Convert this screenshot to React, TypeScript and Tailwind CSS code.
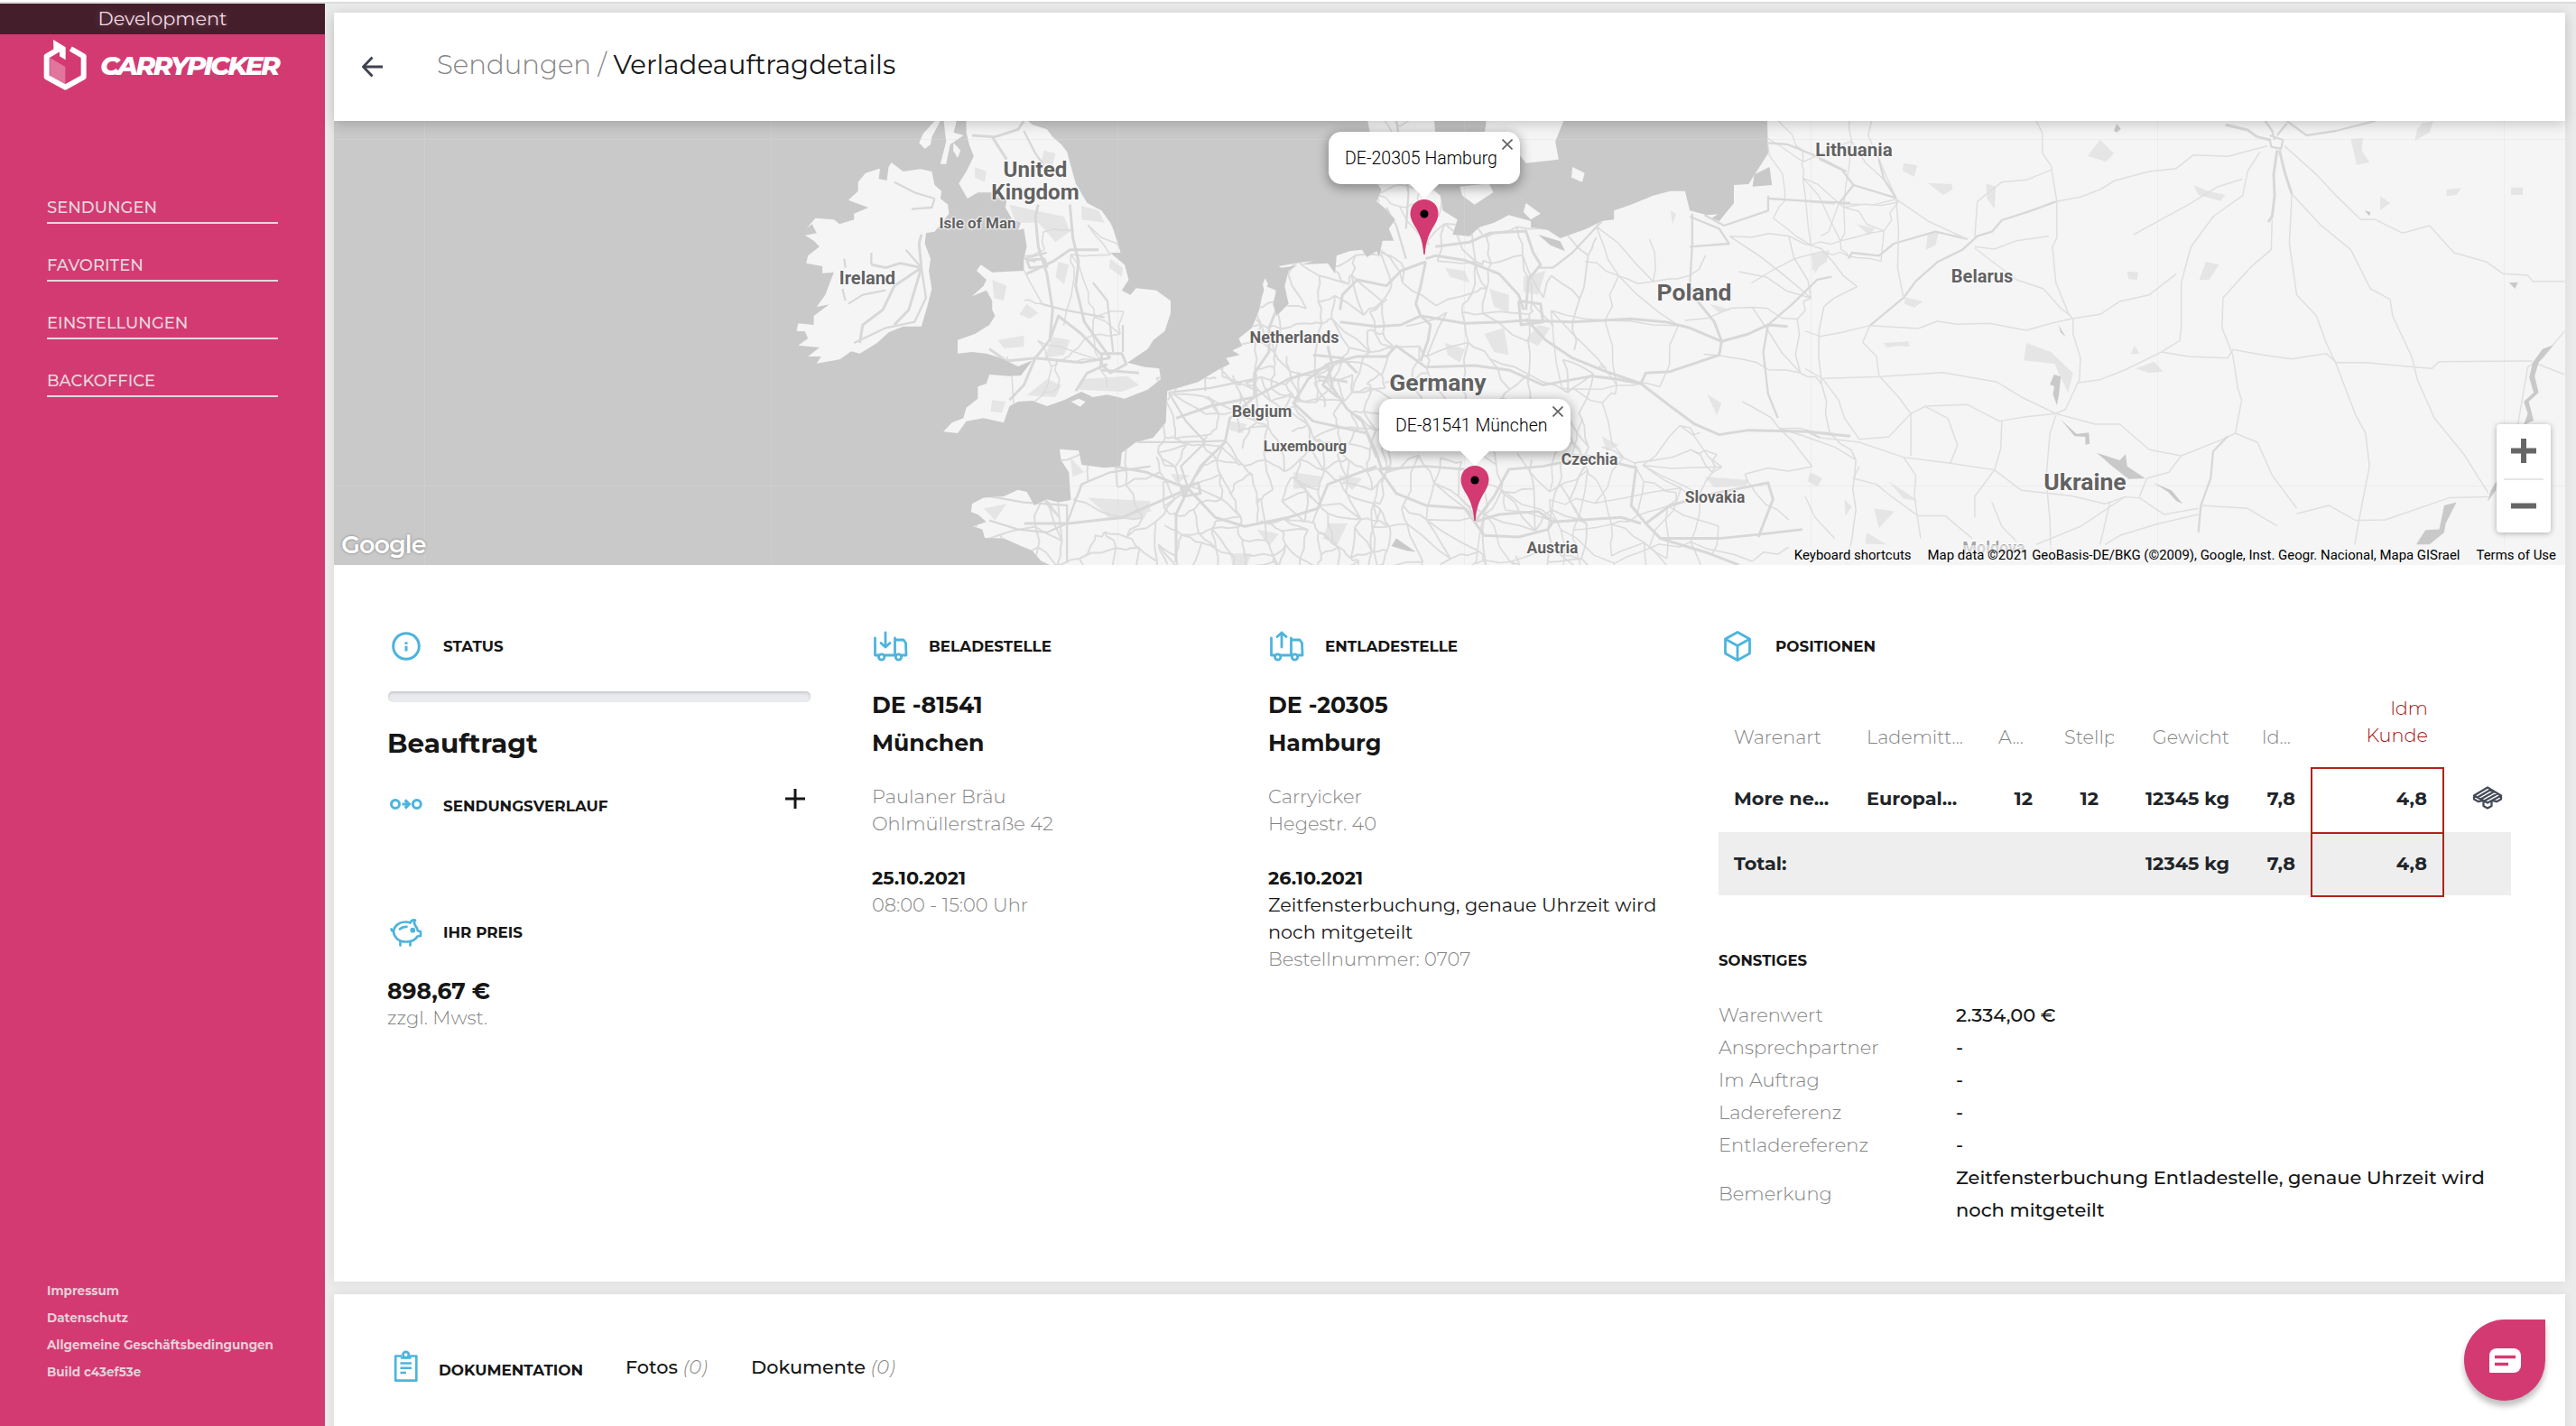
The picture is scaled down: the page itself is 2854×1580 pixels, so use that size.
import type { ReactNode } from 'react';

const BLUE = '#4db4dd';

/* ---------- map data ---------- */

// Three local coordinate frames are used for the coast lines and roads.
const WEST = 'translate(369 130) scale(0.6378 0.3333)';
const MID = 'translate(1200 130) scale(0.5421 0.3333)';
const EAST = 'translate(2000 130) scale(0.5446 0.3333)';

const LAND: { t: string; p: string }[] = [
  {
    t: WEST,
    p: '970,150 990,180 1020,172 1040,180 1045,225 1057,245 1055,270 1068,290 1070,320 1045,380 1030,385 1028,420 1038,470 1035,510 1040,570 1032,630 1022,695 990,695 965,715 945,750 915,785 900,778 880,805 840,818 848,795 825,795 845,765 808,758 825,735 820,712 805,710 808,685 835,690 835,660 862,622 840,630 855,590 865,540 870,515 850,518 850,495 822,485 825,460 845,430 835,410 820,392 840,385 832,355 822,370 838,335 870,340 880,355 905,340 905,320 930,300 895,275 912,245 912,215 925,185 950,170 948,205 962,210 965,165',
  },
  {
    t: WEST,
    p: '1100,0 1200,0 1215,25 1240,40 1250,65 1265,90 1275,115 1280,150 1290,220 1310,285 1335,310 1350,350 1355,370 1368,450 1350,450 1375,490 1382,540 1370,575 1385,590 1395,568 1430,575 1455,610 1455,650 1445,710 1425,740 1415,770 1380,815 1410,830 1435,835 1438,870 1415,905 1375,935 1345,922 1320,930 1300,912 1270,940 1240,960 1215,942 1190,945 1175,960 1165,1015 1130,1000 1100,1010 1085,1050 1060,1045 1075,1015 1095,1000 1100,965 1120,935 1120,895 1135,885 1140,855 1175,860 1195,858 1215,808 1190,828 1160,800 1135,785 1110,780 1085,785 1085,740 1115,720 1140,690 1150,660 1145,640 1145,610 1135,575 1110,595 1130,560 1135,540 1118,510 1125,490 1145,515 1200,510 1200,470 1205,430 1200,370 1190,375 1195,350 1180,340 1168,300 1170,275 1150,250 1120,250 1102,270 1087,220 1100,180 1113,130 1105,90 1100,50',
  },
  { t: WEST, p: '1060,0 1085,0 1078,50 1095,60 1072,90 1065,155 1055,155 1065,80' },
  { t: WEST, p: '1045,12 1055,12 1040,65 1038,90 1028,105 1018,85 1025,55' },
  { t: WEST, p: '1078,85 1090,110 1085,135 1077,110' },
  { t: WEST, p: '1295,935 1307,945 1298,962 1282,945' },
  {
    t: MID,
    p: '-68,1488 -86,1475 -104,1440 -127,1425 -162,1400 -201,1398 -206,1370 -225,1360 -198,1345 -215,1320 -229,1312 -227,1285 -204,1265 -162,1260 -133,1238 -115,1245 -100,1290 -74,1270 -50,1280 -25,1272 -27,1230 -29,1180 -45,1140 -48,1103 -9,1108 -3,1155 43,1165 76,1160 79,1115 108,1080 143,1065 169,1015 172,910 235,880 275,840 300,820 292,800 320,790 305,775 325,760 318,735 345,700 360,640 365,600 372,560 395,575 388,620 395,660 420,620 412,560 420,510 440,490 500,485 515,520 518,460 545,445 570,440 580,465 600,445 605,465 612,410 635,410 625,370 638,340 615,300 600,280 610,240 595,210 598,150 590,80 580,0 717,0 720,60 700,120 700,220 730,260 735,310 765,340 755,390 790,395 810,365 840,350 870,325 915,345 915,365 950,375 975,402 1030,370 1060,345 1085,340 1085,310 1120,290 1165,260 1200,245 1230,245 1240,310 1275,325 1310,320 1330,285 1330,225 1360,222 1400,120 1398,0 3200,0 3200,1510 -68,1510',
  },
  { t: MID, p: '770,230 830,220 838,250 800,290 775,260' },
  { t: MID, p: '825,0 985,0 965,80 972,140 905,152 885,110 870,60 858,90 820,60' },
  { t: MID, p: '1000,165 1025,185 1020,215 998,200' },
  { t: MID, p: '905,285 935,320 915,340 900,315' },
  { t: MID, p: '372,535 378,555 370,575 367,555' },
  { t: MID, p: '400,495 440,483 470,478 440,492 405,500' },
];

const WATER: { t: string; p: string }[] = [
  { t: MID, p: '1372,190 1403,165 1408,225 1368,230' },
  { t: MID, p: '1330,285 1300,345 1285,335 1312,305' },
  { t: MID, p: '930,390 975,412 985,445 955,425' },
  { t: MID, p: '640,1400 680,1445 660,1440 630,1425' },
  { t: EAST, p: '593,1115 640,1140 652,1120 655,1160 692,1200 658,1202 625,1160' },
  { t: EAST, p: '506,855 520,862 516,925 512,957 504,920 507,895 498,888' },
  { t: EAST, p: '1300,1290 1325,1280 1303,1350 1300,1380 1270,1420 1243,1420 1262,1372 1290,1370' },
  { t: EAST, p: '520,1005 552,1052 577,1048 579,1085 570,1088 570,1062 548,1060' },
  { t: EAST, p: '708,1214 745,1240 768,1285 755,1275 738,1245' },
  { t: EAST, p: '1522,757 1492,815 1484,860 1492,915 1472,945 1482,1008 1462,1022 1470,985 1462,945 1482,915 1473,865 1480,815 1500,770' },
  { t: EAST, p: '1410,1200 1405,1240 1388,1278 1395,1240' },
  { t: EAST, p: '628,45 634,22 642,38 634,50' },
  { t: EAST, p: '515,690 530,730 520,715' },
  { t: EAST, p: '1138,310 1150,315 1148,328' },
  { t: EAST, p: '1432,550 1450,548 1444,570' },
];

const PARKS: { t: string; p: string }[] = [
  { t: EAST, p: '600,75 628,120 612,148 575,128 590,95' },
  { t: EAST, p: '1110,72 1135,68 1132,110 1148,150 1122,158' },
  { t: EAST, p: '1255,20 1278,12 1270,50 1240,78 1245,40' },
  { t: EAST, p: '250,218 298,222 300,240 280,258' },
  { t: EAST, p: '368,220 388,230 385,305 370,270' },
  { t: EAST, p: '200,152 228,160 222,198 198,178' },
  { t: EAST, p: '450,750 500,780 545,850 535,915 518,860 508,820 445,808' },
  { t: EAST, p: '250,385 272,380 265,425 245,440' },
  { t: EAST, p: '815,480 842,490 822,540 802,540' },
  { t: EAST, p: '655,512 678,515 675,540 658,538' },
  { t: EAST, p: '203,598 240,612 222,632 202,620' },
  { t: EAST, p: '105,355 142,370 130,392' },
  { t: EAST, p: '790,225 820,245 855,258 845,278 800,258' },
  { t: EAST, p: '1305,240 1335,235 1325,258 1305,262' },
  { t: EAST, p: '1436,233 1460,233 1460,258 1436,258' },
  { t: EAST, p: '1170,262 1190,285 1170,308' },
  { t: EAST, p: '670,758 680,785 662,788' },
  { t: EAST, p: '672,835 710,812 728,845 700,850' },
  { t: EAST, p: '160,750 210,745 212,762 190,760 165,765' },
  { t: EAST, p: '125,1380 165,1420 122,1418' },
  { t: EAST, p: '10,1180 35,1200 25,1228 5,1210' },
  { t: EAST, p: '140,1300 182,1310 150,1365' },
  { t: EAST, p: '12,455 45,450 20,520' },
  { t: EAST, p: '170,1210 230,1275 200,1268' },
  { t: EAST, p: '80,1270 95,1295 82,1325' },
  { t: WEST, p: '1175,290 1220,310 1270,330 1280,380 1255,415 1225,350 1185,350' },
  { t: WEST, p: '1300,295 1330,310 1340,350 1300,340' },
  { t: WEST, p: '1115,165 1135,180 1132,215 1115,200' },
  { t: WEST, p: '1235,110 1255,120 1250,160 1230,150' },
  { t: WEST, p: '1145,540 1170,560 1165,610 1148,600' },
  { t: WEST, p: '1260,480 1278,490 1270,555 1255,530' },
  { t: WEST, p: '1155,740 1200,725 1200,762 1165,768' },
  { t: WEST, p: '1250,730 1280,740 1270,790 1235,800' },
  { t: WEST, p: '1300,870 1380,860 1400,890 1370,912 1295,905' },
  { t: WEST, p: '1240,870 1265,890 1255,930 1205,925' },
  { t: WEST, p: '1145,940 1168,945 1162,982 1142,978' },
  { t: WEST, p: '1205,620 1225,650 1210,670 1192,655' },
  { t: WEST, p: '1350,470 1372,500 1370,530 1348,500' },
  { t: WEST, p: '1320,1265 1380,1280 1420,1275 1410,1330 1350,1340' },
  { t: WEST, p: '1130,1300 1170,1285 1150,1340' },
  { t: WEST, p: '1280,1130 1305,1180 1285,1195' },
  { t: WEST, p: '1455,1185 1490,1190 1465,1215' },
  { t: MID, p: '830,570 870,590 870,650 840,630' },
  { t: MID, p: '900,530 945,510 930,590 900,580' },
  { t: MID, p: '740,750 780,770 770,815 745,790' },
  { t: MID, p: '820,720 860,700 870,790 840,780' },
  { t: MID, p: '740,500 780,510 790,550 750,530' },
  { t: MID, p: '300,1010 335,1020 325,1050 300,1040' },
  { t: MID, p: '355,1370 400,1385 380,1425' },
  { t: MID, p: '500,1350 540,1350 520,1420 490,1400' },
  { t: MID, p: '430,1180 490,1195 480,1230 430,1235' },
  { t: MID, p: '520,1190 570,1200 550,1240' },
  { t: MID, p: '1060,1060 1095,1090 1070,1110' },
  { t: MID, p: '1270,1195 1360,1205 1355,1225 1290,1230' },
  { t: MID, p: '1275,920 1305,950 1295,990' },
  { t: MID, p: '1490,460 1525,440 1520,480 1490,510' },
  { t: MID, p: '1280,620 1325,640 1300,650' },
  { t: MID, p: '1200,310 1212,320 1205,355' },
  { t: MID, p: '1060,815 1072,835 1050,835' },
  { t: MID, p: '300,1450 345,1450 335,1488 305,1488' },
  { t: MID, p: '930,690 955,700 930,760 905,740' },
  { t: MID, p: '10,1265 130,1275 140,1310 60,1340' },
];

// [frame, width, points]
const ROADS: [string, number, string][] = [
  [EAST, 4, '855,25 900,42 920,65 945,75'],
  [EAST, 4, '960,110 953,190 955,260 950,330 942,348'],
  [EAST, 4, '965,110 975,180 990,255'],
  [EAST, 3, '935,10 950,45 955,75 M 960,60 980,20 M 945,60 972,75 968,105 948,98 945,70'],
  [EAST, 2, '940,95 860,130 790,125 755,170 700,180 630,210 600,240 560,265 510,280'],
  [EAST, 3, '510,280 460,310 400,342 380,380 350,395 320,440 270,480 225,545 200,600 132,692'],
  [EAST, 3, '330,405 265,380 180,420 150,460 95,450 88,470'],
  [EAST, 2, '132,692 75,715 30,728 0,710 M 132,692 230,702 268,678 310,688 375,685 450,708 500,685 545,668 600,655 640,612 700,590 755,520'],
  [EAST, 2, '132,692 117,748 145,795 150,858 190,930 215,985 215,1125'],
  [EAST, 2, '135,12 128,60 150,140 185,270 190,380 188,500 200,600'],
  [EAST, 3, '28,138 75,175 98,225 68,288 M 150,140 160,205 185,268 M 98,225 185,268'],
  [EAST, 2, '68,288 140,290 185,272 250,345 330,405 M 0,280 60,288 M 68,288 48,380 32,395'],
  [EAST, 2, '470,12 482,50 483,120 500,160 512,280 512,400 503,430 510,550 535,650 545,672 545,720 560,800 558,870 530,970 510,985'],
  [EAST, 2, '345,435 430,540 485,570 520,635 540,660'],
  [EAST, 2, '345,400 350,280 400,215 450,208 500,175 M 345,430 385,438 430,410 495,395'],
  [EAST, 2, '890,205 840,230 780,290 668,390'],
  [EAST, 2, '925,115 900,180 890,260 830,330 785,430 765,550 765,700 762,742 725,780 650,840 600,872 555,882'],
  [EAST, 2, '950,340 948,440 905,500 850,600 848,700 870,790 880,900 888,940 875,1050'],
  [EAST, 2, '990,255 985,420 1000,590 1040,660 1060,750 1080,820 1120,990 1140,1050 1148,1160 1130,1310 1118,1420'],
  [EAST, 2, '975,95 1040,190 1080,260 1130,340 1160,340 1215,385 1270,360 1320,450 1385,480 1420,520 1470,525 1480,545 1545,545'],
  [EAST, 2, '990,255 1050,360 1110,440 1150,570 1190,605 1195,660 1235,800 1245,870 1280,1000 1340,1120 1390,1250'],
  [EAST, 2, '725,780 780,795 860,800 870,772 930,790 990,803 1060,785 1080,815 1140,815 1240,830 1275,835 1290,812 1480,810'],
  [EAST, 2, '0,835 35,868 155,862 280,848 390,880 440,930 510,985'],
  [EAST, 3, '0,1040 30,1065'],
  [EAST, 2, '30,1065 110,1080 200,1130 295,1150 385,1172 440,1240 540,1258 610,1285 650,1262 680,1265 730,1320 800,1300'],
  [EAST, 2, '35,868 68,940 80,1000 110,1070 170,1062 215,985 245,960 330,955 395,1010 450,995 510,985'],
  [EAST, 2, '245,962 290,1000 310,1090 295,1150 M 400,1010 398,1100 385,1172 345,1260 345,1330'],
  [EAST, 2, '510,985 590,1020 640,1020 700,1105 765,1125 850,1070 875,1050 920,1080 950,1190 1000,1300'],
  [EAST, 2, '765,1125 740,1180 695,1200 680,1262 M 510,990 498,1050 490,1200 498,1340 500,1480'],
  [EAST, 3, '860,1060 830,1110 825,1200 805,1290 800,1380'],
  [EAST, 2, '805,1290 900,1300 960,1358 M 1000,1318 1065,1290 1120,1340 1180,1338 1310,1265 1390,1262'],
  [EAST, 2, '650,1262 560,1360 470,1420 M 800,1320 720,1350 640,1390 610,1420 M 620,1280 600,1420'],
  [EAST, 2, '0,1260 20,1330 60,1400 M 200,1130 225,1190 222,1260 235,1400 M 110,1160 98,1200 145,1220 175,1260 230,1325 285,1325 340,1400'],
  [EAST, 2, '1545,710 1500,800 1470,830 1450,1020 M 1490,820 1545,855 M 380,1280 400,1360 430,1410'],
  [EAST, 3, '980,12 1020,60 1080,45 1160,12'],
  [MID, 4, '700,470 720,460 780,475 850,520 890,590 900,640'],
  [MID, 4, '700,480 650,510 620,560 560,540 530,590 525,640'],
  [MID, 4, '700,480 690,560 680,620 690,660 710,690 705,740 690,810'],
  [MID, 4, '525,680 600,695 650,690 690,660 780,685 860,680 900,675 1000,680 1120,670 1190,680 1240,700 1305,745 1360,720 1400,690 1440,695'],
  [MID, 4, '720,430 790,415 830,385 905,378 920,450 935,490 910,540 905,640'],
  [MID, 4, '905,670 945,740 1000,800 1060,840 1140,885 1200,960 1250,1020 1300,1055 1360,1040 1480,1045 1568,1060'],
  [MID, 4, '500,820 560,795 620,795 640,760 700,830 800,825 870,840 940,890 1040,860 1090,870 1140,885'],
  [MID, 4, '1140,885 1150,850 1200,845 1300,790 1305,745 1290,680 1255,610'],
  [MID, 3, '1245,320 1245,420 1240,560 1260,615 M 1400,690 1450,620 1500,540 1530,530'],
  [MID, 3, '1400,690 1390,780 1400,920 1420,1000'],
  [MID, 4, '500,820 510,900 540,970 570,1010 600,1120 610,1170 700,1160 780,1170'],
  [MID, 4, '500,820 460,870 430,950 470,1010 580,1050 600,1130'],
  [MID, 4, '800,1345 780,1300 700,1290 640,1250 605,1170'],
  [MID, 4, '800,1345 850,1320 930,1310 960,1345 1100,1330 1140,1350 M 800,1345 820,1390 890,1395 950,1370 960,1345'],
  [MID, 4, '800,1345 840,1260 870,1170 940,1160 1000,1140 1040,1130'],
  [MID, 4, '1040,1130 1130,1165 1120,1290 1150,1350 1200,1290 1290,1250 1400,1215 1410,1270 1380,1395'],
  [MID, 4, '1150,1350 1180,1400 1280,1450 1340,1488 M 1180,1400 1300,1400 1390,1385 1470,1370'],
  [MID, 4, '215,1235 130,1180 60,1160 M 215,1235 190,1320 190,1480 M 215,1235 270,1330 330,1360 420,1330 480,1300 500,1220 600,1160'],
  [MID, 4, '215,1235 240,1160 290,1080 300,1000 350,930 M 215,1235 80,1330 -30,1350 -120,1350'],
  [MID, 4, '350,930 350,850 380,780 380,700 400,620 M 350,930 260,960 190,1000 M 350,930 420,870 500,830'],
  [MID, 4, '500,760 510,830 490,890 520,930 M 470,790 530,800 560,850 M 480,860 540,880 M 200,1230 235,1215 240,1250 205,1260 200,1230'],
  [MID, 4, '890,610 935,620 940,680 895,690 890,610'],
  [MID, 3, '175,915 260,900 350,870 M 175,915 210,1010 250,1080 200,1160 215,1235 M 110,1080 200,1080 290,1075'],
  [MID, 3, '660,470 640,360 620,300 M 660,370 665,250 650,100 640,12'],
  [MID, 3, '1060,345 1000,450 960,500 930,500 M 1240,330 1300,370 1320,420 1240,430 M 1270,325 1310,360 1400,310 1400,260'],
  [MID, 3, '1400,85 1440,90 1500,130 1560,180 M 1400,270 1500,280 1568,285'],
  [WEST, 4, '1245,740 1250,640 1240,520 1225,430 1220,330 1225,290 M 1280,290 1285,400 1295,480 1290,560 1305,680 1335,760 1350,800'],
  [WEST, 4, '1205,520 1250,480 1280,440 1330,440 M 1220,800 1245,740 1260,660 1300,720 1335,790 M 1220,800 1300,815 1350,800'],
  [WEST, 4, '1220,800 1170,810 1140,770 M 1220,800 1200,890 1175,940 M 1290,910 1310,850 1345,820 M 1335,840 1400,850'],
  [WEST, 4, '1335,785 1370,785 1378,820 1350,850 1335,820 1335,785 M 1205,475 1235,470 1240,495 1210,500 1205,475'],
  [WEST, 3, '1372,690 1372,780 M 1320,550 1345,610 1355,780 M 1230,620 1270,640 1340,665'],
  [WEST, 4, '1110,60 1150,65 1190,40 1200,12 M 1145,65 1170,140'],
  [WEST, 3, '1200,45 1220,120 1235,160 M 1220,480 1200,470 1240,450'],
  [WEST, 4, '1022,500 985,485 960,500 935,490 M 1022,500 975,560 955,640 920,690 915,750 M 1022,500 1000,640 975,690 M 1022,500 1018,420 1022,390'],
  [WEST, 3, '1022,500 1030,600 1010,680 960,700 905,750 M 960,575 920,590 895,620 M 885,570 890,610 M 1045,270 1040,300 1005,305 M 975,215 1010,250 1045,270 M 1022,500 995,440 M 935,490 935,450 M 890,500 888,470'],
  [WEST, 3, '1275,1350 1275,1290 1200,1280 1140,1260 M 1275,1350 1240,1380 1190,1370 1140,1340 M 1275,1350 1275,1480 M 1275,1350 1300,1220 1350,1180 1420,1160'],
];

function seeded(seed: number) {
  let s = seed;
  return () => {
    s = (s * 16807) % 2147483647;
    return s / 2147483647;
  };
}

// Fine secondary road network: a jittered lattice whose links are bent halfway.
function network(x0: number, y0: number, x1: number, y1: number, step: number, keep: number, seed: number) {
  const r = seeded(seed);
  const cols = Math.ceil((x1 - x0) / step) + 1;
  const rows = Math.ceil((y1 - y0) / step) + 1;
  const pts: [number, number][][] = [];
  for (let j = 0; j < rows; j++) {
    pts.push([]);
    for (let i = 0; i < cols; i++) {
      pts[j].push([x0 + (i + (r() - 0.5) * 0.95) * step, y0 + (j + (r() - 0.5) * 0.95) * step]);
    }
  }
  let d = '';
  const link = (a: [number, number], b: [number, number]) => {
    if (r() > keep) return;
    d += `M${a[0].toFixed(1)} ${a[1].toFixed(1)}`;
    for (let k = 1; k <= 3; k++) {
      const t = k / 3;
      const w = k === 3 ? 0 : step * 0.2;
      d += `L${(a[0] + (b[0] - a[0]) * t + (r() - 0.5) * w).toFixed(1)} ${(a[1] + (b[1] - a[1]) * t + (r() - 0.5) * w).toFixed(1)}`;
    }
  };
  for (let j = 0; j < rows; j++)
    for (let i = 0; i < cols; i++) {
      if (i + 1 < cols) link(pts[j][i], pts[j][i + 1]);
      if (j + 1 < rows) link(pts[j][i], pts[j + 1][i]);
      if (i + 1 < cols && j + 1 < rows && r() > 0.6) link(pts[j][i], pts[j + 1][i + 1]);
    }
  return d;
}

const NETS = [
  { d: network(1290, 420, 1530, 630, 19, 0.72, 11), w: 2 },
  { d: network(1340, 290, 1530, 420, 24, 0.78, 23), w: 2 },
  { d: network(1530, 260, 1740, 630, 32, 0.7, 37), w: 1.9 },
  { d: network(1080, 500, 1290, 630, 30, 0.7, 41), w: 2 },
  { d: network(1740, 260, 2010, 630, 50, 0.62, 53), w: 1.5 },
  { d: network(1500, 130, 1590, 260, 26, 0.6, 59), w: 1.6 },
  { d: network(1960, 130, 2060, 260, 42, 0.6, 61), w: 1.3 },
  { d: network(1120, 250, 1240, 440, 32, 0.5, 67), w: 1.6 },
  { d: network(1640, 500, 1880, 630, 36, 0.6, 71), w: 1.6 },
];

function MapArt() {
  return (
    <svg className="block h-full w-full" viewBox="370 134 2472 492" preserveAspectRatio="none">
      <defs>
        <clipPath id="land">
          {LAND.map((l, i) => (
            <polygon key={i} points={l.p} transform={l.t} />
          ))}
        </clipPath>
      </defs>
      <rect x="370" y="134" width="2472" height="492" fill="#c9c9c9" />
      {LAND.map((l, i) => (
        <polygon key={i} points={l.p} transform={l.t} fill="#f5f5f5" />
      ))}
      <g clipPath="url(#land)">
        {PARKS.map((l, i) => (
          <polygon key={i} points={l.p} transform={l.t} fill="#e5e5e5" />
        ))}
        {NETS.map((n, i) => (
          <path key={i} d={n.d} fill="none" stroke="#dcdcdc" strokeWidth={n.w} strokeLinejoin="round" />
        ))}
        {ROADS.map(([t, w, p], i) => (
          <path
            key={i}
            d={`M ${p}`}
            transform={t}
            fill="none"
            stroke={w > 2 ? '#d8d8d8' : '#dfdfdf'}
            strokeWidth={w > 3 ? 3 : w > 2 ? 2.3 : 1.5}
            strokeLinejoin="round"
            vectorEffect="non-scaling-stroke"
          />
        ))}
      </g>
      {WATER.map((l, i) => (
        <polygon key={i} points={l.p} transform={l.t} fill="#c9c9c9" />
      ))}
      <path
        d="M470.500 134V626M854.500 134V626M1238.500 134V626M1622.500 134V626M2006.500 134V626M2390.500 134V626M2774.500 134V626M370 154.500H2842M370 538.500H2842"
        stroke="#dcdcdc"
        strokeOpacity="0.3"
      />
    </svg>
  );
}

/* ---------- map overlays ---------- */

const HALO = '[text-shadow:0_0_2px_#fff,0_0_2px_#fff,0_0_3px_#fff,0_0_3px_#fff]';

function Label({ at, size, children, faded }: { at: string; size: string; children: ReactNode; faded?: boolean }) {
  return (
    <span
      className={`absolute -translate-x-1/2 -translate-y-1/2 whitespace-nowrap text-center font-['Roboto',sans-serif] font-bold ${faded ? 'text-[#a5a5a5]' : 'text-[#626262]'} ${HALO} ${size} ${at}`}
    >
      {children}
    </span>
  );
}

function Pin({ at, text, pinGap }: { at: string; text: string; pinGap: string }) {
  return (
    <div className={`absolute flex w-[212px] flex-col items-center ${at}`}>
      <div className="relative flex h-[58px] w-full items-center rounded-[14px] bg-white pl-[18px] pt-[1px] shadow-[0_3px_12px_2px_rgba(0,0,0,0.3)]">
        <span className="whitespace-nowrap font-['Roboto',sans-serif] text-[19.5px] font-light tracking-[0.02px] text-black">{text}</span>
        <svg className="absolute right-[8px] top-[8px] size-3" viewBox="0 0 12 12" stroke="#5f5f5f" strokeWidth="1.6">
          <path d="M0.500 0.500L11.500 11.500M11.500 0.500L0.500 11.500" />
        </svg>
      </div>
      <svg className="relative h-[16px] w-[32px]" viewBox="0 0 32 16">
        <path d="M0 0H32L16 16Z" fill="#fff" />
      </svg>
      <svg className={`h-[61px] w-[32px] ${pinGap}`} viewBox="0 0 32 61">
        <path d="M16 0C7 0 .5 7 .5 15.500C.5 22 4 27 7.500 33C11.500 40 14.500 48 15.300 61H16.700C17.500 48 20.500 40 24.500 33C28 27 31.500 22 31.500 15.500C31.500 7 25 0 16 0Z" fill="#d43a72" />
        <circle cx="16" cy="16" r="4.600" fill="#000" />
      </svg>
    </div>
  );
}

function MapPanel() {
  return (
    <div className="relative h-[492px] w-full overflow-hidden">
      <MapArt />
      <Label at="left-[777px] top-[67px]" size="text-[24.200px] leading-[25px]">
        United
        <br />
        Kingdom
      </Label>
      <Label at="left-[713px] top-[113px]" size="text-[17px]">Isle of Man</Label>
      <Label at="left-[591px] top-[174px]" size="text-[20px]">Ireland</Label>
      <Label at="left-[1684px] top-[32px]" size="text-[20.500px]">Lithuania</Label>
      <Label at="left-[1826px] top-[172px]" size="text-[20px]">Belarus</Label>
      <Label at="left-[1507px] top-[190px]" size="text-[26.500px]">Poland</Label>
      <Label at="left-[1064px] top-[240px]" size="text-[18px]">Netherlands</Label>
      <Label at="left-[1223px] top-[290px]" size="text-[26.500px]">Germany</Label>
      <Label at="left-[1028px] top-[322px]" size="text-[18px]">Belgium</Label>
      <Label at="left-[1076px] top-[361px]" size="text-[16.500px]">Luxembourg</Label>
      <Label at="left-[1391px] top-[375px]" size="text-[17.500px]">Czechia</Label>
      <Label at="left-[1530px] top-[417px]" size="text-[17.500px]">Slovakia</Label>
      <Label at="left-[1350px] top-[473px]" size="text-[17.500px]">Austria</Label>
      <Label at="left-[1940px] top-[400px]" size="text-[26.500px]">Ukraine</Label>
      <Label at="left-[1839px] top-[473px]" size="text-[18px]" faded>Moldova</Label>

      <Pin at="left-[1158px] top-[308px]" text="DE-81541 München" pinGap="" />
      <Pin at="left-[1102px] top-[12px]" text="DE-20305 Hamburg" pinGap="mt-[1px]" />

      <span className="absolute bottom-[6px] left-[8px] font-['Montserrat','Open_Sans',sans-serif] text-[27px] font-semibold leading-[32px] tracking-[-0.9px] text-white [text-shadow:0_0_3px_rgba(0,0,0,0.4)]">
        Google
      </span>
      <div className="absolute bottom-0 right-0 flex h-[22px] items-center gap-[18px] bg-[#f5f5f5]/60 pr-[10px] font-['Roboto',sans-serif] text-[14.960px] leading-[22px] text-black">
        <span>Keyboard shortcuts</span>
        <span>Map data ©2021 GeoBasis-DE/BKG (©2009), Google, Inst. Geogr. Nacional, Mapa GISrael</span>
        <span>Terms of Use</span>
      </div>
      <div className="absolute right-[16px] top-[336px] flex h-[120px] w-[60px] flex-col items-center rounded-[4px] bg-white shadow-[0_1px_6px_rgba(0,0,0,0.3)]">
        <svg className="h-[60px] w-[28px]" viewBox="0 0 28 60">
          <path d="M0 29.500H28M14 16V43" stroke="#666" strokeWidth="6" />
        </svg>
        <div className="h-[2px] w-[44px] bg-[#e6e6e6]" />
        <svg className="h-[58px] w-[28px]" viewBox="0 0 28 58">
          <path d="M0 28.500H28" stroke="#666" strokeWidth="6" />
        </svg>
      </div>
    </div>
  );
}

/* ---------- icons ---------- */

function InfoIcon() {
  return (
    <svg className="size-[34px]" viewBox="0 0 34 34" fill="none" stroke={BLUE} strokeWidth="3">
      <circle cx="17" cy="17" r="14.300" />
      <path d="M17 12.300V15M17 16.800V22.500" strokeWidth="3" />
    </svg>
  );
}

function TruckIcon({ up }: { up?: boolean }) {
  return (
    <svg className="h-[36px] w-[38px]" viewBox="0 0 38 36" fill="none" stroke={BLUE} strokeWidth="2.800" strokeLinecap="round" strokeLinejoin="round">
      <path d="M1.500 9V28H5.500M12 28H23.500M23.500 28V9M23.500 11H33L35.500 14.500L36 28H31.500" />
      <circle cx="8.700" cy="30" r="3.200" />
      <circle cx="27.500" cy="30" r="3.200" />
      {up ? <path d="M13 19V3M8 7.500L13 3L18 7.500" /> : <path d="M13 3V19M8 14.500L13 19L18 14.500" />}
    </svg>
  );
}

function RouteIcon() {
  return (
    <svg className="-mt-[4px] h-[16px] w-[36px]" viewBox="0 0 36 16" fill="none" stroke={BLUE} strokeWidth="3">
      <circle cx="6" cy="8" r="4.500" />
      <circle cx="29.800" cy="8" r="4.500" />
      <path d="M13.500 8H21M16.800 3.500L21.300 8L16.800 12.500" strokeWidth="3.200" />
    </svg>
  );
}

function PigIcon() {
  return (
    <svg className="h-[32px] w-[36px]" viewBox="0 0 36 32" fill="none" stroke={BLUE} strokeWidth="2.700" strokeLinejoin="round" strokeLinecap="round">
      <path d="M1.500 12.500C2 14.500 3 15 4 15C5 8 11 4.500 17 4.500C19 4.500 21 4.800 22.500 5.500C23.500 3 25.500 2 28 2.500C26 4.500 27 6.500 28 8.500C30 10.500 30.500 12.500 31 14.500L34 15V20L30.500 20.500C28.500 24 24 26.500 18 26.500C9.500 26.500 4.500 21.500 4 15" />
      <path d="M11.500 26V30.500M22.500 26V30.500M11 12.500C13 10.500 15.500 9.800 18.500 9.800" />
      <circle cx="25.300" cy="13.700" r="1.500" />
    </svg>
  );
}

function BoxIcon() {
  return (
    <svg className="h-[36px] w-[32px]" viewBox="0 0 32 36" fill="none" stroke={BLUE} strokeWidth="2.800" strokeLinejoin="round">
      <path d="M16 2.500L29.500 10V26L16 33.500L2.500 26V10ZM2.500 10L16 17.500L29.500 10M16 17.500V33.500" />
    </svg>
  );
}

function PalletIcon() {
  return (
    <svg className="h-[26px] w-[34px]" viewBox="0 0 34 26" fill="none" stroke="#454c59" strokeWidth="2.300" strokeLinejoin="round">
      <path d="M17 1.500L32 10.500L17 18.500L2 10.500ZM5.800 12.500L20.800 3.800M9.500 14.500L24.500 6M13.200 16.500L28.200 8.200M2 10.500V14.500L7 17.200L12 15.800M32 10.500V14.500L27 17.200L22 15.800M12.500 16.500V22L17 24.500L21.500 22V16.500" />
    </svg>
  );
}

function ClipboardIcon() {
  return (
    <svg className="h-[36px] w-[28px]" viewBox="0 0 28 36" fill="none" stroke={BLUE} strokeWidth="2.700" strokeLinejoin="round">
      <path d="M9 6.500H2.200V33.700H25.300V6.500H18" />
      <circle cx="13.700" cy="5" r="3.200" />
      <path d="M8 8.500H19.500" strokeWidth="2.600" />
      <path d="M7.500 14.500H20M7.500 19.800H20M7.500 25H14" strokeWidth="2.600" />
    </svg>
  );
}

function LogoMark() {
  return (
    <svg className="h-[56px] w-[48px] shrink-0" viewBox="54 42 144 168">
      <path d="M76 102L127 132V190L76 162Z" fill="#fff" fillOpacity="0.3" />
      <path d="M145 72L188 97V166L127 200L65 166V97L108 72" fill="none" stroke="#fff" strokeWidth="18" strokeLinejoin="round" />
      <path d="M87 42L128 67V109L108 97V82L88 78V64Z" fill="#fff" />
    </svg>
  );
}

/* ---------- page parts ---------- */

function Heading({ icon, gap, children }: { icon: ReactNode; gap: string; children: ReactNode }) {
  return (
    <div className="flex h-[36px] items-center">
      <div className={`flex shrink-0 items-center ${gap}`}>{icon}</div>
      <h2 className="whitespace-nowrap text-[16.800px] font-bold leading-[36px]">{children}</h2>
    </div>
  );
}

function Sidebar() {
  return (
    <aside className="flex h-full w-[360px] shrink-0 flex-col bg-[#d43a72]">
      <div className="flex h-[34px] items-center justify-center bg-[#441e2b] text-[20.800px] leading-[34px] text-[#f6dbe5] [text-shadow:0_0_8px_rgba(255,255,255,0.25)]">
        Development
      </div>
      <div className="mt-[6px] flex h-[56px] items-center pl-[48px]">
        <LogoMark />
        <span className="ml-[15px] text-[29.500px] font-extrabold italic leading-[32px] tracking-[-2.600px] text-white">
          CARRYPICKER
        </span>
      </div>
      <nav className="mt-[116px] flex flex-col gap-8 px-[52px]">
        {['SENDUNGEN', 'FAVORITEN', 'EINSTELLUNGEN', 'BACKOFFICE'].map((n) => (
          <a key={n} className="border-b-2 border-[#e3d7dc] pb-[2px] text-[18px] font-medium leading-[28px] text-[#e3d7dc]">
            {n}
          </a>
        ))}
      </nav>
      <div className="mb-[45px] mt-auto flex flex-col pl-[52px] text-[13.500px] font-bold leading-[30px] text-[#e3d0d8]">
        <span>Impressum</span>
        <span>Datenschutz</span>
        <span>Allgemeine Geschäftsbedingungen</span>
        <span>Build c43ef53e</span>
      </div>
    </aside>
  );
}

function StatusColumn() {
  return (
    <section className="w-[536px]">
      <Heading icon={<InfoIcon />} gap="w-[58px] ml-[3px]">STATUS</Heading>
      <div className="mt-8 h-[12px] w-[468px] rounded-[5px] bg-[#e9eaee] shadow-[inset_0_2px_3px_rgba(0,0,0,0.14)]" />
      <p className="-ml-px mb-px mt-[25px] text-[29.500px] font-bold leading-[40px]">Beauftragt</p>
      <div className="mt-8 flex w-[468px] justify-between">
        <Heading icon={<RouteIcon />} gap="w-[59px] ml-[2px]">SENDUNGSVERLAUF</Heading>
        <svg className="-mt-px mr-[6px] size-[22px]" viewBox="0 0 22 22">
          <path d="M0 11H22M11 0V22" stroke="#161616" strokeWidth="3" />
        </svg>
      </div>
      <div className="mt-[104px]">
        <Heading icon={<PigIcon />} gap="w-[59px] ml-[2px]">IHR PREIS</Heading>
      </div>
      <p className="-ml-px mt-8 text-[25px] font-bold leading-[30px]">898,67 €</p>
      <p className="-ml-px text-[21px] font-light text-[#848484]">zzgl. Mwst.</p>
    </section>
  );
}

function Stop({ width, icon, title, zip, city, address, date, children }: { width: string; icon: ReactNode; title: string; zip: string; city: string; address: string[]; date: string; children: ReactNode }) {
  return (
    <section className={width}>
      <Heading icon={icon} gap="w-[61px] ml-[2px]">{title}</Heading>
      <p className="mb-[24px] mt-[26px] text-[25.200px] font-bold leading-[42px]">
        {zip}
        <br />
        {city}
      </p>
      {address.map((a) => (
        <p key={a} className="text-[21px] font-light text-[#848484]">{a}</p>
      ))}
      <p className="mt-[30px] font-bold">{date}</p>
      {children}
    </section>
  );
}

const COLS = 'grid grid-cols-[147px_146px_73px_73px_144px_73px_148px_74px]';

function Positions() {
  return (
    <section className="w-[878px]">
      <Heading icon={<BoxIcon />} gap="w-[58px] ml-[5px]">POSITIONEN</Heading>
      <div className={`${COLS} h-[116px] items-end pb-[18px] font-light text-[#848484]`}>
        <span className="pl-[17px]">Warenart</span>
        <span className="pl-[17px]">Lademitt...</span>
        <span className="pl-[17px]">A...</span>
        <span className="mr-[1px] overflow-hidden pl-[17px]">Stellplätze</span>
        <span className="pr-[17px] text-right">Gewicht</span>
        <span className="pl-[19px]">ld...</span>
        <span className="pb-[2px] pr-[18px] text-right text-[#a81410]">
          ldm
          <br />
          Kunde
        </span>
      </div>
      <div className={`${COLS} h-[72px] font-bold leading-[69px] text-[#212529]`}>
        <span className="pl-[17px]">More ne...</span>
        <span className="pl-[17px]">Europal...</span>
        <span className="pr-[18px] text-right">12</span>
        <span className="pr-[18px] text-right">12</span>
        <span className="pr-[17px] text-right">12345 kg</span>
        <span className="pr-[17px] text-right">7,8</span>
        <span className="border-x-2 border-t-2 border-[#b0231d] pr-[17px] text-right leading-[65px]">4,8</span>
        <span className="flex items-center pb-[5px] pl-[31px]">
          <PalletIcon />
        </span>
      </div>
      <div className={`${COLS} h-[70px] bg-[#eee] font-bold leading-[69px] text-[#212529]`}>
        <span className="col-span-4 pl-[17px]">Total:</span>
        <span className="pr-[17px] text-right">12345 kg</span>
        <span className="pr-[17px] text-right">7,8</span>
        <span className="h-[72px] border-2 border-[#b0231d] pr-[17px] text-right leading-[65px]">4,8</span>
      </div>
      <h3 className="mt-[60px] text-[16.500px] font-bold leading-[24px]">SONSTIGES</h3>
      <dl className="mt-[31px] grid grid-cols-[263px_1fr] items-center leading-[36px]">
        {[
          ['Warenwert', '2.334,00 €'],
          ['Ansprechpartner', '-'],
          ['Im Auftrag', '-'],
          ['Ladereferenz', '-'],
          ['Entladereferenz', '-'],
          ['Bemerkung', 'Zeitfensterbuchung Entladestelle, genaue Uhrzeit wird noch mitgeteilt'],
        ].map(([k, v]) => (
          <div key={k} className="contents">
            <dt className="text-[21px] font-light text-[#848484]">{k}</dt>
            <dd className="text-[21px] font-medium">{v}</dd>
          </div>
        ))}
      </dl>
    </section>
  );
}

export default function App() {
  return (
    <div className="relative h-[1580px] w-[2854px] overflow-hidden bg-white font-['Montserrat','Open_Sans',sans-serif] text-[20.800px] leading-[30px] text-[#161616]">
      <div className="mt-[2px] h-[2px] bg-[#dcdcdc]" />
      <div className="flex h-[1576px] bg-[#ebebeb]">
        <Sidebar />
        <main className="ml-[10px] mt-[10px] w-[2472px]">
          <header className="relative z-10 flex h-[120px] items-center bg-white pb-[5px] shadow-[0_3px_14px_rgba(0,0,0,0.2)]">
            <svg className="ml-[31px] mt-[5px] size-[24px]" viewBox="0 0 24 24" fill="none" stroke="#3f4350" strokeWidth="2.800">
              <path d="M23 12H1.500M11.500 1.500L1.500 12L11.500 22.500" />
            </svg>
            <h1 className="ml-[59px] text-[29.250px] font-normal leading-[40px]">
              <span className="font-light text-[#848484]">Sendungen / </span>
              Verladeauftragdetails
            </h1>
          </header>
          <div className="h-[1286px] bg-white shadow-[0_0_12px_rgba(0,0,0,0.07)]">
            <MapPanel />
            <div className="flex pl-[60px] pt-[72px]">
              <StatusColumn />
              <Stop width="w-[439px]" icon={<TruckIcon />} title="BELADESTELLE" zip="DE -81541" city="München" address={['Paulaner Bräu', 'Ohlmüllerstraße 42']} date="25.10.2021">
                <p className="text-[21px] font-light text-[#848484]">08:00 - 15:00 Uhr</p>
              </Stop>
              <Stop width="w-[499px]" icon={<TruckIcon up />} title="ENTLADESTELLE" zip="DE -20305" city="Hamburg" address={['Carryicker', 'Hegestr. 40']} date="26.10.2021">
                <p>
                  Zeitfensterbuchung, genaue Uhrzeit wird
                  <br />
                  noch mitgeteilt
                </p>
                <p className="text-[21px] font-light text-[#848484]">Bestellnummer: 0707</p>
              </Stop>
              <Positions />
            </div>
          </div>
          <div className="mt-[14px] h-[200px] bg-white shadow-[0_0_12px_rgba(0,0,0,0.07)]">
            <div className="flex items-start pl-[66px] pt-[58px] leading-[40px]">
              <div className="flex h-[44px] items-center">
                <ClipboardIcon />
              </div>
              <h2 className="ml-[22px] w-[207px] pt-[6px] text-[16.800px] font-bold">DOKUMENTATION</h2>
              <span className="w-[139px] pt-[3px] font-medium">
                Fotos <em className="text-[21px] font-light text-[#848484]">(0)</em>
              </span>
              <span className="pt-[3px] font-medium">
                Dokumente <em className="text-[21px] font-light text-[#848484]">(0)</em>
              </span>
            </div>
          </div>
        </main>
      </div>
      <button className="absolute bottom-[28px] right-[34px] flex size-[90px] items-center justify-center rounded-bl-full rounded-br-full rounded-tl-full rounded-tr-[8px] bg-[#d43a72] shadow-[0_6px_6px_rgba(0,0,0,0.25)]">
        <svg className="h-[27px] w-[35px]" viewBox="0 0 35 27">
          <path d="M8 0H27A8 8 0 0 1 35 8V19A8 8 0 0 1 27 27H1.500A1.500 1.500 0 0 1 0 25.500V8A8 8 0 0 1 8 0Z" fill="#fff" />
          <path d="M6 9.500H29M6 17.500H21" stroke="#d43a72" strokeWidth="3.400" />
        </svg>
      </button>
    </div>
  );
}
